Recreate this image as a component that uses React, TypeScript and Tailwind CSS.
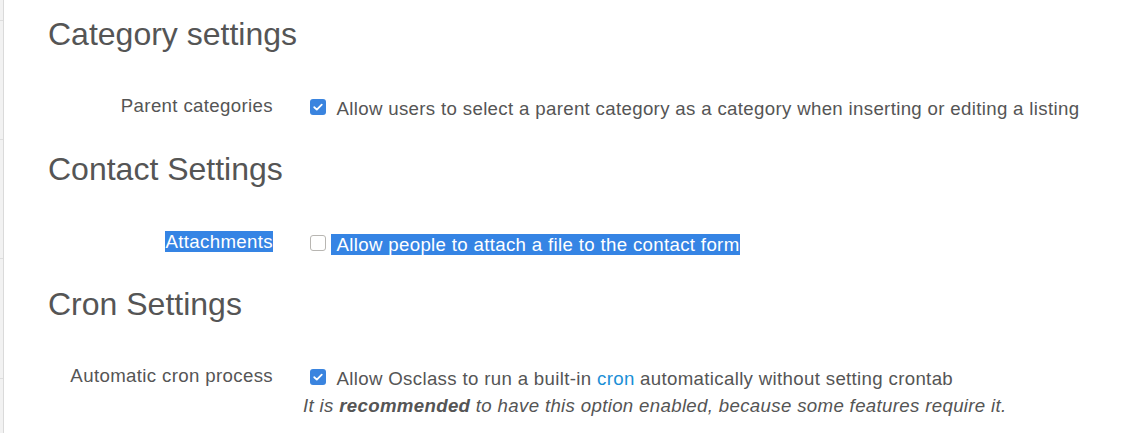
import type { ReactNode } from 'react'

type SettingRowProps = {
  label: ReactNode
  checked: boolean
  children: ReactNode
  note?: ReactNode
}

function Checkbox({ checked }: { checked: boolean }) {
  if (checked) {
    return (
      <span className="mt-[3px] mr-[5px] inline-flex h-[16px] w-[16px] shrink-0 items-center justify-center rounded-[3px] bg-[#3a84df]">
        <svg viewBox="0 0 16 16" className="h-[12px] w-[12px]" fill="none">
          <path d="M3 8.3 6.4 11.5 13 4.8" stroke="#fff" strokeWidth="2.4" strokeLinecap="round" strokeLinejoin="round" />
        </svg>
      </span>
    )
  }

  return <span className="mt-[3px] mr-[5px] inline-block h-[16px] w-[16px] shrink-0 rounded-[3px] border border-[#b8b6b2] bg-white" />
}

function SettingRow({ label, checked, children, note }: SettingRowProps) {
  return (
    <div className="flex">
      <div className="w-[225px] text-right leading-[26px] tracking-[0.35px]">{label}</div>
      <div className="ml-[30px] pt-[3px] tracking-[0.33px]">
        <div className="flex items-start pl-[7px] leading-[26px]">
          <Checkbox checked={checked} />
          <span>{children}</span>
        </div>
        {note ? <p className="mt-px leading-[26px] italic">{note}</p> : null}
      </div>
    </div>
  )
}

export default function App() {
  return (
    <div className="flex min-h-[433px] bg-white text-[18.67px] text-[#555] [font-family:'Liberation_Sans',Arial,sans-serif]">
      <aside className="w-[4px] shrink-0 border-r border-[#dadada] bg-[#f2f2f2]">
        <div className="h-[21px] border-b border-[#dedede]" />
        <div className="h-[119px] border-b border-[#dedede]" />
        <div className="h-[119px] border-b border-[#dedede]" />
        <div className="h-[120px] border-b border-[#dedede]" />
      </aside>

      <main className="flex-1 pt-[17px] pl-[44px]">
        <section>
          <h2 className="text-[32px] leading-[35px] font-normal">Category settings</h2>
          <div className="mt-[41px]">
            <SettingRow label="Parent categories" checked>
              {'\u00a0'}Allow users to select a parent category as a category when inserting or editing a listing
            </SettingRow>
          </div>
        </section>

        <section className="mt-[30px]">
          <h2 className="text-[32px] leading-[35px] font-normal">Contact Settings</h2>
          <div className="mt-[42px]">
            <SettingRow label={<span className="bg-[#3584e4] text-white">Attachments</span>} checked={false}>
              <span className="bg-[#3584e4] text-white">{'\u00a0'}Allow people to attach a file to the contact form</span>
            </SettingRow>
          </div>
        </section>

        <section className="mt-[29px]">
          <h2 className="text-[32px] leading-[35px] font-normal">Cron Settings</h2>
          <div className="mt-[41px]">
            <SettingRow
              label="Automatic cron process"
              checked
              note={
                <>
                  It is <strong className="font-bold">recommended</strong> to have this option enabled, because some features require it.
                </>
              }
            >
              {'\u00a0'}Allow Osclass to run a built-in <a href="#" className="text-[#1b8fd6]">cron</a> automatically without setting crontab
            </SettingRow>
          </div>
        </section>
      </main>
    </div>
  )
}
